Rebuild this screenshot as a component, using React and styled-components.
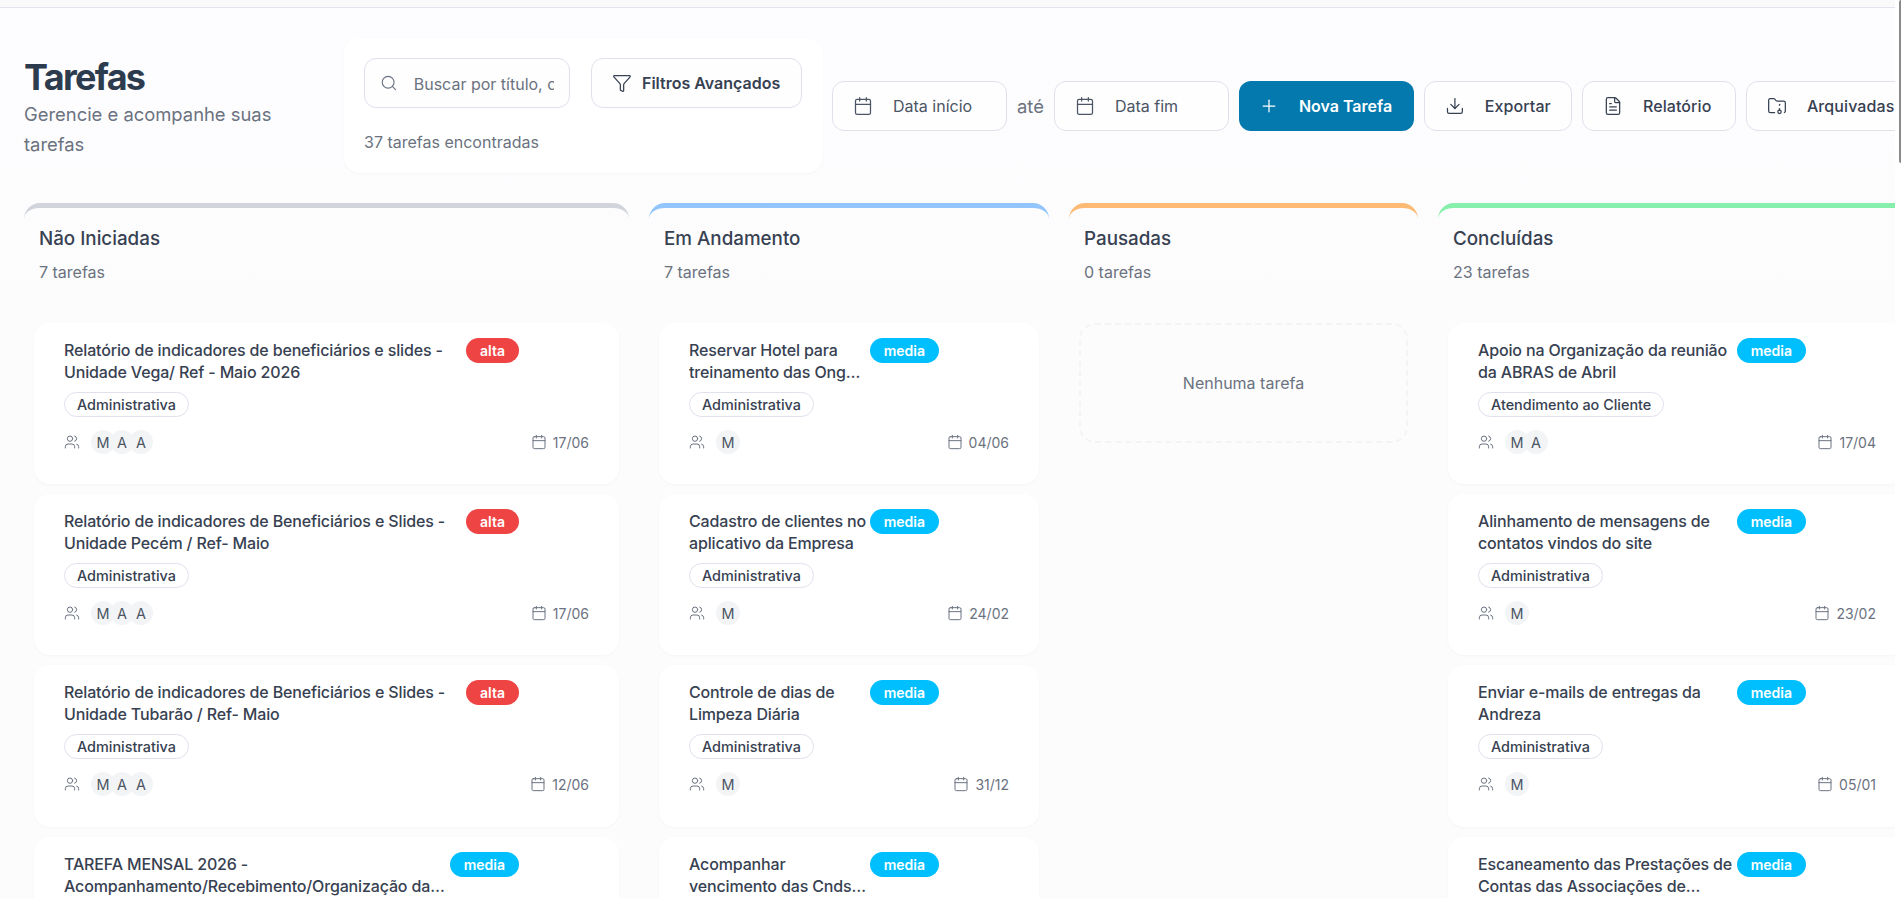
import React from 'react';
import styled, { createGlobalStyle } from 'styled-components';
import { Search, Funnel, Calendar, Plus, Download, FileText, FolderArchive, Users } from 'lucide-react';

const GlobalStyle = createGlobalStyle`
  html, body {
    margin: 0;
    height: 100%;
    overflow: hidden;
    background: #fdfdfe;
    font-family: Inter, "Noto Sans", sans-serif;
    color: #374151;
  }
  * { box-sizing: border-box; }
`;

const columns = [
  {
    title: 'Não Iniciadas',
    count: '7 tarefas',
    color: '#d1d5db',
    width: 605,
    tasks: [
      { title: 'Relatório de indicadores de beneficiários e slides - Unidade Vega/ Ref - Maio 2026', priority: 'alta', tag: 'Administrativa', people: ['M', 'A', 'A'], date: '17/06' },
      { title: 'Relatório de indicadores de Beneficiários e Slides - Unidade Pecém / Ref- Maio', priority: 'alta', tag: 'Administrativa', people: ['M', 'A', 'A'], date: '17/06' },
      { title: 'Relatório de indicadores de Beneficiários e Slides - Unidade Tubarão / Ref- Maio', priority: 'alta', tag: 'Administrativa', people: ['M', 'A', 'A'], date: '12/06' },
      { title: 'TAREFA MENSAL 2026 - Acompanhamento/Recebimento/Organização das Prestações de Contas', priority: 'media', tag: 'Administrativa', people: ['M'], date: '' },
    ],
  },
  {
    title: 'Em Andamento',
    count: '7 tarefas',
    color: '#93c5fd',
    width: 400,
    tasks: [
      { title: 'Reservar Hotel para treinamento das Ongs parceiras da Unidade', priority: 'media', tag: 'Administrativa', people: ['M'], date: '04/06' },
      { title: 'Cadastro de clientes no aplicativo da Empresa', priority: 'media', tag: 'Administrativa', people: ['M'], date: '24/02' },
      { title: 'Controle de dias de Limpeza Diária', priority: 'media', tag: 'Administrativa', people: ['M'], date: '31/12' },
      { title: 'Acompanhar vencimento das Cnds das Associações parceiras', priority: 'media', tag: 'Administrativa', people: ['M'], date: '' },
    ],
  },
  {
    title: 'Pausadas',
    count: '0 tarefas',
    color: '#fdba74',
    width: 349,
    tasks: [],
  },
  {
    title: 'Concluídas',
    count: '23 tarefas',
    color: '#86efac',
    width: 478,
    tasks: [
      { title: 'Apoio na Organização da reunião da ABRAS de Abril', priority: 'media', tag: 'Atendimento ao Cliente', people: ['M', 'A'], date: '17/04' },
      { title: 'Alinhamento de mensagens de contatos vindos do site', priority: 'media', tag: 'Administrativa', people: ['M'], date: '23/02' },
      { title: 'Enviar e-mails de entregas da Andreza', priority: 'media', tag: 'Administrativa', people: ['M'], date: '05/01' },
      { title: 'Escaneamento das Prestações de Contas das Associações de Moradores da Região', priority: 'media', tag: 'Administrativa', people: ['M'], date: '' },
    ],
  },
];

const App = () => (
  <Page>
    <GlobalStyle />
    <Main>
      <TopStrip />
      <Header>
        <TitleBlock>
          <Title>Tarefas</Title>
          <Subtitle>Gerencie e acompanhe suas tarefas</Subtitle>
        </TitleBlock>
        <SearchCard>
          <SearchRow>
            <SearchBox>
              <Search size={22} strokeWidth={1.5} color="#6b7280" />
              <SearchInput readOnly placeholder="Buscar por título, código..." />
            </SearchBox>
            <FilterButton>
              <Funnel size={20} strokeWidth={1.5} />
              Filtros Avançados
            </FilterButton>
          </SearchRow>
          <FoundText>37 tarefas encontradas</FoundText>
        </SearchCard>
        <Actions>
          <DateButton>
            <Calendar size={20} strokeWidth={1.5} />
            Data início
          </DateButton>
          <UntilText>até</UntilText>
          <DateButton>
            <Calendar size={20} strokeWidth={1.5} />
            Data fim
          </DateButton>
          <PrimaryButton>
            <Plus size={20} strokeWidth={1.5} />
            Nova Tarefa
          </PrimaryButton>
          <ActionButton $width={148}>
            <Download size={20} strokeWidth={1.5} />
            Exportar
          </ActionButton>
          <ActionButton $width={154}>
            <FileText size={20} strokeWidth={1.5} />
            Relatório
          </ActionButton>
          <ActionButton $width={170}>
            <FolderArchive size={20} strokeWidth={1.5} />
            Arquivadas
          </ActionButton>
        </Actions>
      </Header>
      <Board>
        {columns.map((col) => (
          <Column key={col.title} $width={col.width} $color={col.color}>
            <ColumnTitle>{col.title}</ColumnTitle>
            <ColumnCount>{col.count}</ColumnCount>
            <CardList>
              {col.tasks.length === 0 && <EmptyBox>Nenhuma tarefa</EmptyBox>}
              {col.tasks.map((task) => (
                <Card key={task.title}>
                  <CardTop>
                    <CardTitle>{task.title}</CardTitle>
                    <Priority $level={task.priority}>{task.priority}</Priority>
                  </CardTop>
                  <Tag>{task.tag}</Tag>
                  <CardBottom>
                    <People>
                      <Users size={16} strokeWidth={1.5} color="#6b7280" />
                      <Avatars>
                        {task.people.map((p, i) => (
                          <Avatar key={i}>{p}</Avatar>
                        ))}
                      </Avatars>
                    </People>
                    <DueDate>
                      <Calendar size={16} strokeWidth={1.5} />
                      {task.date}
                    </DueDate>
                  </CardBottom>
                </Card>
              ))}
            </CardList>
          </Column>
        ))}
      </Board>
    </Main>
    <ScrollTrack>
      <ScrollThumb />
    </ScrollTrack>
  </Page>
);

const Page = styled.div`
  display: flex;
  width: 100vw;
  height: 100vh;
  overflow: hidden;
  background: #ffffff;
`;

const Main = styled.div`
  flex: 1;
  min-width: 0;
  overflow: hidden;
  background: linear-gradient(180deg, #fdfdff 0, #fcfcfd 300px);
`;

const TopStrip = styled.div`
  height: 8px;
  background: #fafafa;
  border-bottom: 1px solid #e2e3ec;
`;

const Header = styled.div`
  display: flex;
  align-items: center;
  gap: 20px;
  padding: 30px 0 0 24px;
`;

const TitleBlock = styled.div`
  width: 300px;
  flex-shrink: 0;
  padding-top: 3px;
`;

const Title = styled.h1`
  margin: 0;
  font-size: 36px;
  line-height: 44px;
  font-weight: 700;
  letter-spacing: -1.7px;
  color: #2d3b4e;
`;

const Subtitle = styled.p`
  margin: 0;
  font-size: 18.4px;
  line-height: 30px;
  color: #6b7280;
`;

const SearchCard = styled.div`
  width: 479px;
  height: 135px;
  flex-shrink: 0;
  padding: 20px;
  background: #ffffff;
  border-radius: 16px;
  box-shadow: 0 1px 3px rgba(0, 0, 0, 0.03);
`;

const SearchRow = styled.div`
  display: flex;
  gap: 21px;
`;

const SearchBox = styled.div`
  display: flex;
  align-items: center;
  gap: 16px;
  width: 206px;
  height: 50px;
  padding: 0 15px;
  border: 1px solid #e0e1ec;
  border-radius: 12px;
  background: #fefeff;
`;

const SearchInput = styled.input`
  width: 100%;
  min-width: 0;
  padding: 2px 0 0;
  border: none;
  outline: none;
  background: transparent;
  font: 400 16px Inter, sans-serif;
  &::placeholder { color: #6b7280; opacity: 1; }
`;

const BaseButton = styled.button`
  display: flex;
  align-items: center;
  flex-shrink: 0;
  height: 50px;
  padding: 0 20px;
  gap: 20px;
  border: 1px solid #e0e1ec;
  border-radius: 12px;
  background: #fefeff;
  color: #374151;
  font: 500 16px Inter, sans-serif;
  white-space: nowrap;
`;

const FilterButton = styled(BaseButton)`
  gap: 10px;
  width: 211px;
  font-weight: 600;
`;

const FoundText = styled.div`
  margin-top: 22px;
  font-size: 16px;
  line-height: 24px;
  color: #6b7280;
`;

const Actions = styled.div`
  display: flex;
  align-items: center;
  gap: 10px;
  margin-left: -11px;
`;

const DateButton = styled(BaseButton)`
  width: 175px;
  color: #4b5563;
  font-weight: 400;
`;

const UntilText = styled.span`
  font-size: 18.4px;
  color: #6b7280;
`;

const PrimaryButton = styled(BaseButton)`
  width: 175px;
  border: none;
  background: #0479ad;
  color: #ffffff;
  font-weight: 600;
`;

const ActionButton = styled(BaseButton)`
  width: ${(p) => p.$width}px;
  font-weight: 500;
  letter-spacing: 0.1px;
`;

const Board = styled.div`
  display: flex;
  gap: 20px;
  padding: 30px 0 0 24px;
`;

const Column = styled.section`
  flex-shrink: 0;
  width: ${(p) => p.$width}px;
  padding-top: 17px;
  border-top: 5px solid ${(p) => p.$color};
  border-radius: 16px;
`;

const ColumnTitle = styled.h2`
  margin: 0;
  padding: 0 15px;
  font-size: 18.8px;
  line-height: 28px;
  font-weight: 500;
  color: #374151;
`;

const ColumnCount = styled.div`
  margin-top: 7px;
  padding: 0 15px;
  font-size: 16px;
  line-height: 24px;
  color: #6b7280;
`;

const CardList = styled.div`
  display: flex;
  flex-direction: column;
  gap: 10px;
  margin-top: 39px;
  padding: 0 10px;
`;

const Card = styled.article`
  min-height: 161.2px;
  padding: 15px 30px 20px;
  background: #ffffff;
  border-radius: 16px;
  box-shadow: 0 1px 3px rgba(0, 0, 0, 0.03);
`;

const CardTop = styled.div`
  display: flex;
  align-items: flex-start;
  gap: 2px;
  padding-right: 70px;
  padding-top: 1px;
`;

const CardTitle = styled.h3`
  flex: 1;
  min-width: 0;
  margin: 0;
  font-size: 16px;
  line-height: 22px;
  font-weight: 500;
  letter-spacing: -0.15px;
  color: #374151;
  display: -webkit-box;
  -webkit-box-orient: vertical;
  -webkit-line-clamp: 2;
  overflow: hidden;
`;

const Priority = styled.span`
  flex-shrink: 0;
  margin-top: -1px;
  height: 25px;
  padding: 0 14px;
  border-radius: 999px;
  font-size: 14px;
  line-height: 25px;
  font-weight: 600;
  color: #ffffff;
  background: ${(p) => (p.$level === 'alta' ? '#ef4444' : '#00bfff')};
`;

const Tag = styled.span`
  display: inline-block;
  height: 25px;
  margin-top: 9px;
  padding: 0 12px;
  border: 1px solid #e0e1ec;
  border-radius: 999px;
  font-size: 14.4px;
  line-height: 23px;
  font-weight: 500;
  color: #374151;
`;

const CardBottom = styled.div`
  display: flex;
  align-items: center;
  justify-content: space-between;
  margin-top: 13px;
`;

const People = styled.div`
  display: flex;
  align-items: center;
  gap: 11px;
`;

const Avatars = styled.div`
  display: flex;
`;

const Avatar = styled.span`
  display: flex;
  align-items: center;
  justify-content: center;
  width: 24px;
  height: 24px;
  border-radius: 50%;
  background: #f3f4f6;
  font-size: 14.4px;
  color: #4b5563;
  & + & { margin-left: -5px; }
`;

const DueDate = styled.div`
  display: flex;
  align-items: center;
  gap: 6px;
  font-size: 14px;
  color: #6b7280;
`;

const EmptyBox = styled.div`
  display: flex;
  align-items: center;
  justify-content: center;
  height: 120px;
  border: 2px dashed #f4f4f5;
  border-radius: 16px;
  font-size: 16px;
  color: #6b7280;
`;

const ScrollTrack = styled.div`
  flex-shrink: 0;
  width: 6px;
  background: #ffffff;
  display: flex;
  justify-content: flex-end;
`;

const ScrollThumb = styled.div`
  width: 2px;
  height: 163px;
  border-radius: 2px 0 0 2px;
  background: #8a8a8a;
`;

export default App;
